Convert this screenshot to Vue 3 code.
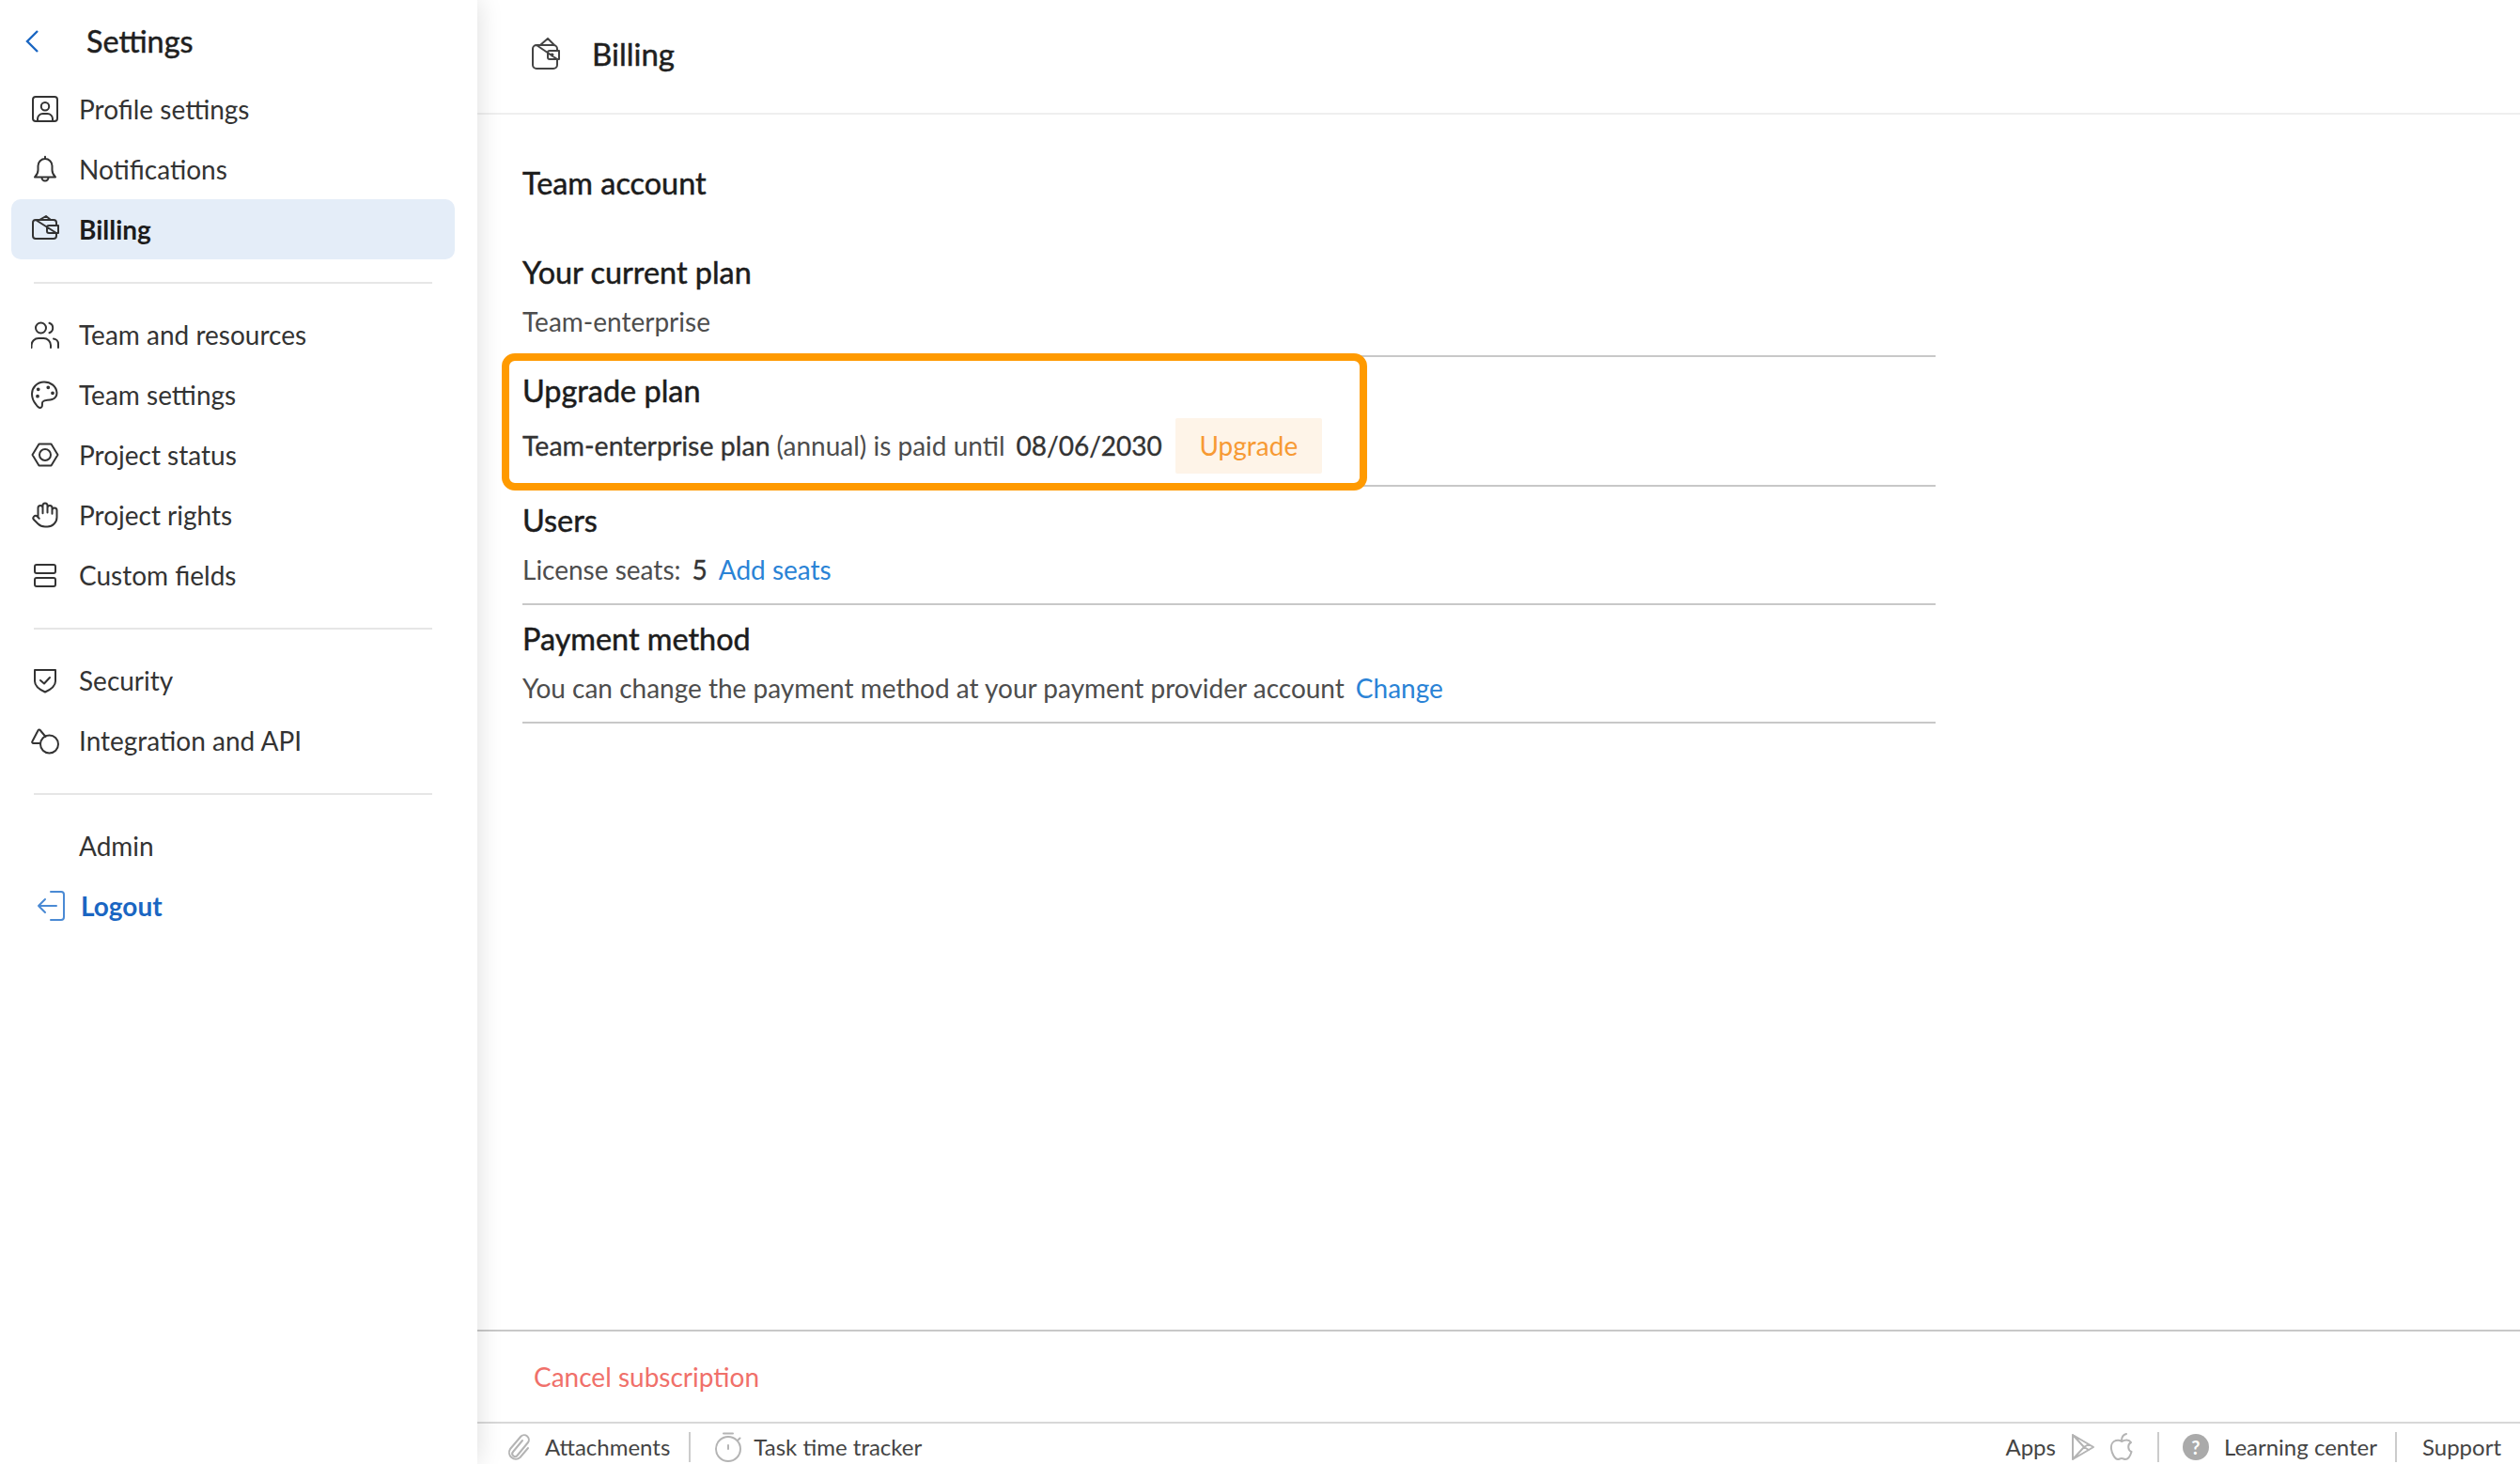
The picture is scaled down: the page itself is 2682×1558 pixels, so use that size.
<script setup>
const groups = [
  [
    { label: 'Profile settings', vb: '0 0 30 30', d: 'M5 2h20a3 3 0 0 1 3 3v20a3 3 0 0 1-3 3H5a3 3 0 0 1-3-3V5a3 3 0 0 1 3-3z M15 8a4.200 4.200 0 1 1 0 8.400a4.200 4.200 0 1 1 0-8.400z M7 28v-2.500a5.500 5.500 0 0 1 5.500-5.500h5a5.500 5.500 0 0 1 5.500 5.500V28' },
    { label: 'Notifications', vb: '0 0 30 30', d: 'M15 4a7.500 7.500 0 0 0-7.500 7.500v4.500c0 3.500-1.500 5.500-3.500 7.500h22c-2-2-3.500-4-3.500-7.500v-4.500A7.500 7.500 0 0 0 15 4z M15 1.800V4 M11.500 24a3.500 3.500 0 0 0 7 0' },
    { label: 'Billing', active: true, vb: '0 0 30 30', d: 'M9 5L16 1L21 5 M5 5h19a3 3 0 0 1 3 3v3 M27 19v3a3 3 0 0 1-3 3H5a3 3 0 0 1-3-3V8a3 3 0 0 1 3-3z M19 11h10v8H19a2 2 0 0 1-2-2v-4a2 2 0 0 1 2-2z' },
  ],
  [
    { label: 'Team and resources', vb: '0 0 30 30', d: 'M10.500 2.500a5.500 5.500 0 1 1 0 11a5.500 5.500 0 1 1 0-11z M0.500 29v-2.500a7.500 7.500 0 0 1 7.500-7.500h5.500a7.500 7.500 0 0 1 7.500 7.500V29 M19.500 2.800a5.500 5.500 0 0 1 0 10.400 M24 19.500a5.500 5.500 0 0 1 5 5.500v4' },
    { label: 'Team settings', vb: '0 0 30 30', d: 'M14 1.500C6 1.500 1 8 1 14c0 4 1.500 8 4 11c2 3 4 5 6 3.500c2-1.500 0-4 1.500-6c2-2.500 6-1 10-2.500c3-1 5-3 5-7C27 6 21 1.500 14 1.500z M7 15.800a.9 .9 0 1 1 0 1.800a.9 .9 0 1 1 0-1.800z M7.700 8.400a.9 .9 0 1 1 0 1.800a.9 .9 0 1 1 0-1.800z M18.300 6.400a.9 .9 0 1 1 0 1.800a.9 .9 0 1 1 0-1.800z M23 12.400a.9 .9 0 1 1 0 1.800a.9 .9 0 1 1 0-1.800z' },
    { label: 'Project status', vb: '0 0 30 30', d: 'M8.500 3.500h13L28.500 15l-7 11.500h-13L1.500 15z M15 9a6 6 0 1 1 0 12a6 6 0 1 1 0-12z' },
    { label: 'Project rights', vb: '0 0 24 24', sw: 1.6, d: 'M18 11V6a2 2 0 0 0-4 0 M14 10V4a2 2 0 0 0-4 0v2 M10 10.500V6a2 2 0 0 0-4 0v8 M18 8a2 2 0 1 1 4 0v6a8 8 0 0 1-8 8h-2c-2.800 0-4.500-.86-5.990-2.340l-3.600-3.600a2 2 0 0 1 2.830-2.820L7 15' },
    { label: 'Custom fields', vb: '0 0 30 30', d: 'M6 4h18a2 2 0 0 1 2 2v5a2 2 0 0 1-2 2H6a2 2 0 0 1-2-2V6a2 2 0 0 1 2-2z M6 18h18a2 2 0 0 1 2 2v5a2 2 0 0 1-2 2H6a2 2 0 0 1-2-2v-5a2 2 0 0 1 2-2z' },
  ],
  [
    { label: 'Security', vb: '0 0 30 30', d: 'M4 4h22v12c0 6-5.500 9-11 11.500C9.500 25 4 22 4 16z M10 15l4 3.500l6-6.500' },
    { label: 'Integration and API', vb: '0 0 30 30', d: 'M9.500 18H2.500a1.300 1.300 0 0 1-1.100-2L7.700 4a1.200 1.200 0 0 1 2 0L15.500 11 M19.500 9.500a9.500 9.500 0 1 1 0 19a9.500 9.500 0 1 1 0-19z' },
  ],
]
</script>

<template>
  <div class="page">
    <aside class="side">
      <div class="side-head">
        <svg class="back" viewBox="0 0 16 26"><path d="M14 2L3 13l11 11" /></svg>
        <span>Settings</span>
      </div>
      <nav v-for="(g, i) in groups" :key="i" class="group">
        <a v-for="it in g" :key="it.label" class="item" :class="{ active: it.active }">
          <svg class="ico" :viewBox="it.vb" :stroke-width="it.sw || 2"><path :d="it.d" /></svg>
          <span>{{ it.label }}</span>
        </a>
      </nav>
      <div class="group last">
        <a class="item"><span class="ico"></span><span>Admin</span></a>
        <a class="item logout">
          <svg class="ico logout-ico" viewBox="0 0 32 34"><path d="M16 2h11a3 3 0 0 1 3 3v24a3 3 0 0 1-3 3H16 M22 17H3 M10 10l-7 7l7 7" /></svg>
          <span>Logout</span>
        </a>
      </div>
    </aside>

    <main class="main">
      <header class="top">
        <svg class="top-ico" viewBox="0 0 32 34"><path d="M10 8L18 1L25 8 M6 8h18a4 4 0 0 1 4 4v2 M28 23v6a4 4 0 0 1-4 4H6a4 4 0 0 1-4-4V12a4 4 0 0 1 4-4z M20 14h10v9H20a2 2 0 0 1-2-2v-5a2 2 0 0 1 2-2z M22.500 17.500a1 1 0 1 1 0 2a1 1 0 1 1 0-2z" /></svg>
        <span>Billing</span>
      </header>

      <div class="content">
        <h1 class="head">Team account</h1>

        <section class="sec">
          <h2>Your current plan</h2>
          <div class="line muted">Team-enterprise</div>
        </section>

        <section class="sec upgrade">
          <div class="hl"></div>
          <h2>Upgrade plan</h2>
          <div class="line row">
            <span class="med">Team-enterprise plan</span>
            <span class="muted annual">(annual) is paid until</span>
            <span class="date">08/06/2030</span>
            <span class="btn">Upgrade</span>
          </div>
        </section>

        <section class="sec">
          <h2>Users</h2>
          <div class="line row">
            <span class="muted">License seats:</span>
            <span class="num">5</span>
            <a class="link">Add seats</a>
          </div>
        </section>

        <section class="sec">
          <h2>Payment method</h2>
          <div class="line row">
            <span class="muted">You can change the payment method at your payment provider account</span>
            <a class="link">Change</a>
          </div>
        </section>
      </div>

      <div class="cancel">Cancel subscription</div>

      <footer class="foot">
        <div class="foot-part">
          <svg class="f-ico clip" viewBox="0 0 26 30"><path d="M16 8L6 20a3 3 0 0 0 4.500 4L22 10a5 5 0 0 0-7.500-6.500L3 17a7 7 0 0 0 10.500 9L22 16" /></svg>
          <span>Attachments</span>
          <i class="sep s1"></i>
          <svg class="f-ico timer" viewBox="0 0 30 32"><path d="M15 5a13 13 0 1 1 0 26a13 13 0 1 1 0-26z M10 1.500h10 M15 14v4 M26 8l1.500-1.500" /></svg>
          <span>Task time tracker</span>
        </div>
        <div class="foot-part">
          <span>Apps</span>
          <svg class="f-ico play" viewBox="0 0 26 30"><path d="M2 2l22 13L2 28z M2 2l12 13L2 28 M14 15l5-3 M14 15l5 3" /></svg>
          <svg class="f-ico apple" viewBox="0 0 26 30"><path d="M13 9c-2-1.500-4-1.500-6-1C3 9 1.500 13 2 17c.5 4 3.500 11 7 11c1.500 0 2.500-1 4-1s2.500 1 4 1c3 0 5.500-4.500 6.500-8c-4-1.500-4.500-8-.5-10c-2-3-6-3-10-1z M13 8c0-3 1.500-6 5-7" /></svg>
          <i class="sep s2"></i>
          <span class="q">?</span>
          <span>Learning center</span>
          <i class="sep s3"></i>
          <span>Support</span>
        </div>
      </footer>
    </main>
  </div>
</template>

<style scoped>
.page {
  display: flex;
  height: 1558px;
  width: 2682px;
  overflow: hidden;
  font-family: Lato, "Liberation Sans", sans-serif;
  color: #2c2c2c;
  background: #fff;
}
.side {
  width: 508px;
  flex: none;
  background: #fff;
  box-shadow: 0 0 26px rgba(0, 0, 0, 0.14);
  position: relative;
  z-index: 1;
  padding: 0 24px 0 12px;
  box-sizing: border-box;
}
.side-head {
  height: 84px;
  padding: 3px 0 0 14px;
  box-sizing: border-box;
  display: flex;
  align-items: center;
  font-size: 32.4px;
  color: #1f1f1f;
  -webkit-text-stroke: 0.5px #1f1f1f;
}
.back {
  width: 16px;
  height: 26px;
  margin-right: 50px;
  fill: none;
  stroke: #1a66c2;
  stroke-width: 2.4;
}
.group {
  display: flex;
  flex-direction: column;
  padding-bottom: 26px;
  margin-bottom: 22px;
  position: relative;
}
.group::after {
  content: "";
  position: absolute;
  left: 24px;
  right: 24px;
  bottom: 0;
  height: 2px;
  background: #e6e6e6;
}
.group.last::after {
  display: none;
}
.item {
  height: 64px;
  display: flex;
  align-items: center;
  gap: 21px;
  padding-left: 21px;
  font-size: 28px;
  color: #333;
  border-radius: 10px;
}
.item.active {
  background: #e4edf8;
  color: #1c1c1c;
  font-weight: 700;
}
.ico {
  width: 30px;
  height: 30px;
  flex: none;
  fill: none;
  stroke: #333;
  stroke-linecap: round;
  stroke-linejoin: round;
}
.logout {
  color: #1a66c2;
  font-weight: 700;
}
.logout-ico {
  width: 32px;
  height: 34px;
  stroke: #4a8ad4;
  stroke-width: 2;
  margin-left: 5px;
  margin-right: -5px;
}
.main {
  flex: 1;
  min-width: 0;
  display: flex;
  flex-direction: column;
}
.top {
  height: 122px;
  flex: none;
  box-sizing: border-box;
  border-bottom: 2px solid #efefef;
  display: flex;
  align-items: center;
  gap: 33px;
  padding: 0 0 6px 57px;
  font-size: 33px;
  color: #1f1f1f;
  -webkit-text-stroke: 0.5px #1f1f1f;
}
.top-ico {
  width: 32px;
  height: 34px;
  fill: none;
  stroke: #444;
  stroke-width: 2;
  stroke-linejoin: round;
  stroke-linecap: round;
}
.content {
  flex: 1;
  padding: 53px 0 0 48px;
  width: 1552px;
  box-sizing: border-box;
}
.head,
h2 {
  margin: 0;
  font-size: 32.4px;
  line-height: 40px;
  font-weight: 400;
  color: #1c1c1c;
  -webkit-text-stroke: 0.5px #1c1c1c;
}
.head {
  margin-bottom: 39px;
}
.sec {
  position: relative;
  padding: 16px 0;
  border-bottom: 2px solid #c8c8c8;
}
.line {
  margin-top: 12px;
  font-size: 28px;
  line-height: 40px;
}
.row {
  display: flex;
  align-items: center;
}
.muted {
  color: #4d4d4d;
}
.num {
  margin-left: 12px;
  color: #333;
  -webkit-text-stroke: 0.35px #333;
}
.link {
  margin-left: 12px;
  color: #2a83d6;
}
.upgrade {
  padding-bottom: 12px;
}
.upgrade .line {
  margin-top: 9px;
  line-height: 59px;
}
.med {
  color: #333;
  font-size: 28.5px;
  -webkit-text-stroke: 0.35px #333;
}
.annual {
  margin-left: 7px;
}
.date {
  margin-left: 12px;
  color: #333;
  -webkit-text-stroke: 0.35px #333;
}
.btn {
  margin-left: 14px;
  width: 156px;
  height: 59px;
  line-height: 59px;
  text-align: center;
  background: #fef4e8;
  color: #f79a34;
  border-radius: 2px;
}
.hl {
  position: absolute;
  left: -22px;
  top: -4px;
  bottom: -6px;
  width: 921px;
  box-sizing: border-box;
  border: 8px solid #ff9a00;
  border-radius: 14px;
  pointer-events: none;
}
.cancel {
  flex: none;
  height: 98px;
  box-sizing: border-box;
  border-top: 2px solid #c8c8c8;
  display: flex;
  align-items: center;
  padding-left: 60px;
  font-size: 28px;
  color: #f0706a;
}
.foot {
  flex: none;
  height: 45px;
  box-sizing: border-box;
  border-top: 2px solid #d8d8d8;
  display: flex;
  justify-content: space-between;
  align-items: center;
  font-size: 24px;
  color: #444;
  padding: 6px 20px 0 32px;
}
.foot-part {
  display: flex;
  align-items: center;
}
.f-ico {
  fill: none;
  stroke: #b4b4b4;
  stroke-width: 2;
  stroke-linejoin: round;
  stroke-linecap: round;
  flex: none;
}
.clip {
  width: 26px;
  height: 30px;
  margin-right: 14px;
}
.timer {
  width: 30px;
  height: 32px;
  margin-right: 12px;
}
.play {
  width: 26px;
  height: 30px;
  margin-left: 16px;
}
.apple {
  width: 26px;
  height: 30px;
  margin-left: 15px;
}
.sep {
  width: 2px;
  height: 32px;
  background: #ccc;
}
.sep.s1 {
  margin: 0 25px 0 20px;
}
.sep.s2 {
  margin: 0 25px;
}
.sep.s3 {
  margin: 0 27px 0 19px;
}
.q {
  width: 28px;
  height: 28px;
  border-radius: 50%;
  background: #aaa;
  color: #fff;
  font-size: 20px;
  font-weight: 700;
  line-height: 28px;
  text-align: center;
  margin-right: 16px;
}
</style>
